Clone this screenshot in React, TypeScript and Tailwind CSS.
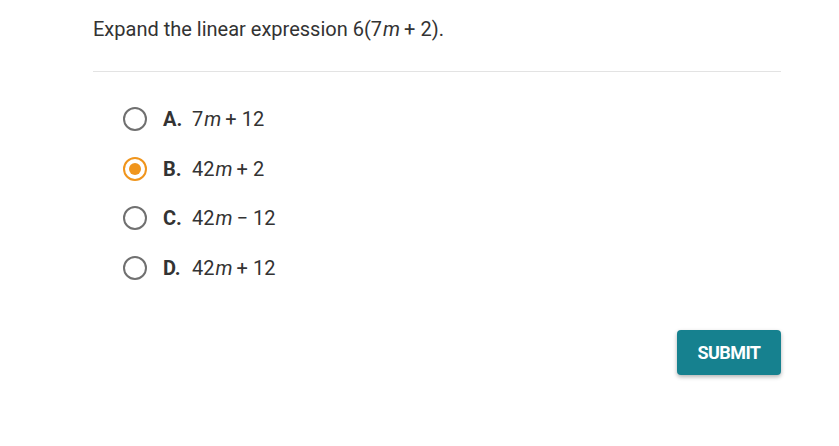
import React, { useState } from "react";

interface Option {
  letter: string;
  pre: string;
  post: string;
}

const options: Option[] = [
  { letter: "A.", pre: "7", post: "+ 12" },
  { letter: "B.", pre: "42", post: "+ 2" },
  { letter: "C.", pre: "42", post: "\u2212 12" },
  { letter: "D.", pre: "42", post: "+ 12" },
];

function Radio({ checked }: { checked: boolean }) {
  return checked ? (
    <div className="flex h-6 w-6 items-center justify-center rounded-full border-2 border-[#f0951c]">
      <div className="h-3 w-3 rounded-full bg-[#f0951c]" />
    </div>
  ) : (
    <div className="h-6 w-6 rounded-full border-2 border-[#707070]" />
  );
}

export default function App() {
  const [selected, setSelected] = useState(1);
  return (
    <div className="h-[446px] w-[839px] bg-white font-['Roboto',sans-serif] text-[#333333]">
      <div className="ml-[93px] w-[688px] pt-[15px]">
        <p className="text-[20px] leading-[28px]">
          Expand the linear expression 6(7<i className="pl-[1px]">m</i>&thinsp;+ 2).
        </p>
        <hr className="mt-[28px] border-0 border-t border-[#e3e3e3]" />
        <div className="mt-[35px] flex flex-col gap-[25.5px] pl-[30px]">
          {options.map((o, i) => (
            <button
              key={o.letter}
              onClick={() => setSelected(i)}
              className="flex h-6 items-center text-left"
            >
              <Radio checked={selected === i} />
              <span className="ml-[16px] w-[29px] text-[20px] font-bold">{o.letter}</span>
              <span className="text-[20px]">
                {o.pre}
                <i className="pl-[1px]">m</i>&thinsp;{o.post}
              </span>
            </button>
          ))}
        </div>
        <div className="mt-[50px] flex justify-end">
          <button className="h-[45px] w-[104px] rounded-[4px] bg-[#16818f] text-[18px] font-bold tracking-[-0.6px] text-white shadow-[0_2px_4px_rgba(0,0,0,0.3)]">
            SUBMIT
          </button>
        </div>
      </div>
    </div>
  );
}
